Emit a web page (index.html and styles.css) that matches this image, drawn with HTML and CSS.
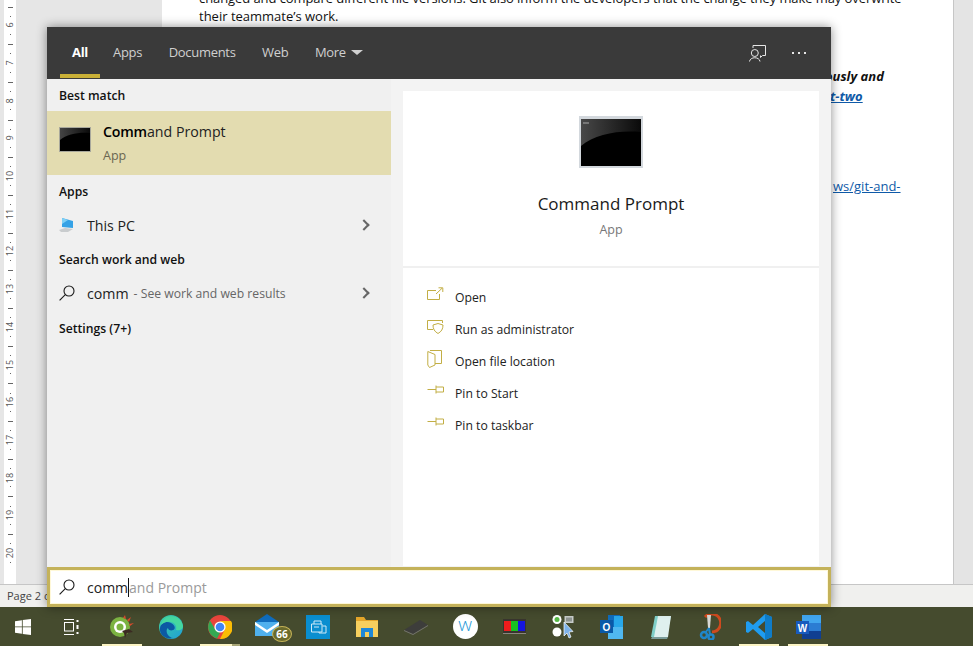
FILE: index.html
```html
<!DOCTYPE html>
<html lang="en">
<head>
  <meta charset="UTF-8">
  <title>Command Prompt search</title>
  <link rel="stylesheet" href="styles.css">
</head>
<body>

  <!-- Word window behind the search panel -->
  <div class="word">
    <div class="ruler-strip">
      <div class="ruler">
        <div class="ruler-cell"><span>6</span></div>
        <div class="ruler-cell"><span>7</span></div>
        <div class="ruler-cell"><span>8</span></div>
        <div class="ruler-cell"><span>9</span></div>
        <div class="ruler-cell"><span>10</span></div>
        <div class="ruler-cell"><span>11</span></div>
        <div class="ruler-cell"><span>12</span></div>
        <div class="ruler-cell"><span>13</span></div>
        <div class="ruler-cell"><span>14</span></div>
        <div class="ruler-cell"><span>15</span></div>
        <div class="ruler-cell"><span>16</span></div>
        <div class="ruler-cell"><span>17</span></div>
        <div class="ruler-cell"><span>18</span></div>
        <div class="ruler-cell"><span>19</span></div>
        <div class="ruler-cell"><span>20</span></div>
      </div>
    </div>
    <div class="doc-page">
      <div class="doc-line doc-first">changed and compare different file versions. Git also inform the developers that the change they make may overwrite</div>
      <div class="doc-line">their teammate’s work.</div>
      <div class="doc-tail doc-tail-a"><b><i>ously and</i></b></div>
      <div class="doc-tail doc-tail-b"><a><b><i>t-two</i></b></a></div>
      <div class="doc-tail doc-tail-c"><a>ws/git-and-</a></div>
    </div>
    <div class="doc-scroll"></div>
  </div>
  <div class="statusbar">Page 2 of 3</div>

  <div class="taskbar">
    <div class="task-start">
      <svg width="16" height="16" viewBox="0 0 16 16"><path fill="#fff" d="M0 2.2 6.9 1.2V7.500H0ZM7.700 1.100 16 0V7.500H7.700ZM0 8.300H6.900V14.800L0 13.800ZM7.700 8.300H16V16L7.700 14.900Z"/></svg>
    </div>
    <div class="task-view">
      <svg width="16" height="16" viewBox="0 0 16 16" fill="none" stroke="#fff" stroke-width="1"><path d="M1 .5H11M1 15.500H11"/><rect x="1.500" y="3.500" width="9" height="8.500"/><path d="M14.500 1V3M14.500 6V10M14.500 13V15" stroke-width="2"/></svg>
    </div>
    <div class="task-apps">
      <div class="task-app is-open">
        <svg width="26" height="26" viewBox="0 0 26 26"><circle cx="11" cy="13" r="10" fill="#7cb342"/><circle cx="11" cy="13" r="6" fill="#fff"/><circle cx="11" cy="13" r="3.500" fill="#7cb342"/><path fill="#d84a2b" d="M14 4 16 1 17 5ZM18 6 22 3 20 8ZM20 10 25 9 21 12Z"/><path fill="#3b2a22" d="M13 17 20 15 24 18 18 19 16 24 15 19Z"/></svg>
      </div>
      <div class="task-app">
        <svg width="24" height="24" viewBox="0 0 24 24"><defs><linearGradient id="edgeA" x1="0" y1="0" x2="1" y2="1"><stop offset="0" stop-color="#3fd0a0"/><stop offset="1" stop-color="#1f9fd8"/></linearGradient></defs><circle cx="12" cy="12" r="12" fill="url(#edgeA)"/><path fill="#0c59a4" d="M1 13C2 7 8 6 12 8 16 10 17 14 14 15 12 16 9 15 9 13 6 15 8 22 14 23 7 25 0 20 1 13Z"/><path fill="#45d7a0" d="M12 1C18 1 23 5 24 11 24 15 20 16 17 15 18 11 16 8 12 7 8 6 4 8 2 10 3 5 7 1 12 1Z"/></svg>
      </div>
      <div class="task-app is-open is-split">
        <svg width="24" height="24" viewBox="0 0 24 24"><circle cx="12" cy="12" r="12" fill="#e8453c"/><path fill="#fbbc05" d="M12 6H23A12 12 0 0 1 12 24L17 14Z"/><path fill="#34a853" d="M2 5.500 7 14 12 18 9 23.500A12 12 0 0 1 2 5.500Z"/><circle cx="12" cy="12" r="5.600" fill="#fff"/><circle cx="12" cy="12" r="4.300" fill="#4285f4"/></svg>
      </div>
      <div class="task-app">
        <svg class="mail-icon" width="26" height="22" viewBox="0 0 26 22"><path fill="#0f6cbd" d="M1 8 13 0 25 8V9H1Z"/><rect x="1" y="8" width="24" height="14" fill="#4fb0ee"/><path fill="#fff" d="M1 8 13 16 25 8V11L13 19 1 11Z"/></svg>
        <span class="mail-badge">66</span>
      </div>
      <div class="task-app">
        <svg width="24" height="24" viewBox="0 0 24 24"><rect width="24" height="24" fill="#0a8ed0"/><path fill="none" stroke="#cfe9f7" stroke-width="1" d="M8 9V6H15V9M5.500 9H16V17H5.500ZM16.500 11H20V18H13V17M8 12H13"/></svg>
      </div>
      <div class="task-app">
        <svg width="24" height="22" viewBox="0 0 24 22"><path fill="#e4a62a" d="M1 1H9L11 4H23V9H1Z"/><rect x="1" y="5" width="22" height="16" fill="#f6cf5e"/><path fill="#1e88d8" d="M6 21V12H18V21H14V16H10V21Z"/></svg>
      </div>
      <div class="task-app">
        <svg width="26" height="16" viewBox="0 0 26 16"><path fill="#3d3d3b" d="M1 11 17 1 25 6 10 15Z"/><path fill="#75756f" d="M1 11 10 15V16L1 12ZM10 15 25 6V7L10 16Z"/></svg>
      </div>
      <div class="task-app">
        <div class="w-badge">w</div>
      </div>
      <div class="task-app">
        <div class="rgb-icon"><i class="rgb-r"></i><i class="rgb-g"></i><i class="rgb-b"></i></div>
      </div>
      <div class="task-app">
        <svg width="24" height="24" viewBox="0 0 24 24"><circle cx="6" cy="4.500" r="4.500" fill="#fff"/><circle cx="6" cy="4.500" r="2.500" fill="#57b947"/><circle cx="6" cy="17" r="4.500" fill="#fff"/><rect x="13.500" y="1" width="9" height="7" fill="#c8ccca"/><rect x="15" y="2.500" width="6" height="4" fill="#8d9390"/><path fill="#7db2ea" stroke="#fff" stroke-width=".7" d="M13 7V21L16 18 18 23 20 22 18 17 22 16.500Z"/></svg>
      </div>
      <div class="task-app">
        <svg width="24" height="24" viewBox="0 0 24 24"><rect x="8" y="0" width="12" height="24" fill="#0f6cbd"/><rect x="14" y="1" width="9" height="11" fill="#28a8ea"/><path fill="#50b8f0" d="M8 12 23 12V24H8Z"/><rect x="0" y="5" width="13" height="13" fill="#0a5aa8"/><text class="tile-letter" x="6.500" y="15.500" text-anchor="middle">O</text></svg>
      </div>
      <div class="task-app">
        <svg width="22" height="24" viewBox="0 0 22 24"><path fill="#7fcfc8" d="M5 1H21L16 22H1Z"/><path fill="#dff0ee" d="M8 1H21L18 22H4Z"/><path fill="#7a9c99" d="M2 22H18L17 24H1Z"/></svg>
      </div>
      <div class="task-app">
        <svg width="22" height="26" viewBox="0 0 22 26"><path fill="none" stroke="#cf4a1e" stroke-width="3" d="M6 3A9 9 0 1 1 13 18"/><path fill="#d8d8d4" d="M8 1H12L11 14 9 14Z"/><circle cx="5" cy="21" r="3" fill="none" stroke="#1f86c9" stroke-width="2.500"/><circle cx="12" cy="23" r="2.500" fill="none" stroke="#1f86c9" stroke-width="2.500"/><path stroke="#1f86c9" stroke-width="2" d="M6 19 10 14M11 21 10 14"/></svg>
      </div>
      <div class="task-app is-open">
        <svg width="26" height="26" viewBox="0 0 26 26"><path fill="#1f9cf0" d="M19 0 26 3V23L19 26 7 15 2 19 0 18V8L2 7 7 11ZM19 7 12 13 19 19Z"/><path fill="#0f7cc8" d="M19 0 26 3V23L19 26Z"/></svg>
      </div>
      <div class="task-app is-open">
        <svg width="25" height="24" viewBox="0 0 25 24"><rect x="6" y="0" width="19" height="8" fill="#41a5ee"/><rect x="6" y="8" width="19" height="8" fill="#2b7cd3"/><rect x="6" y="16" width="19" height="8" fill="#103f91"/><rect x="0" y="6" width="13" height="13" fill="#185abd"/><text class="tile-letter" x="6.500" y="16.500" text-anchor="middle">W</text></svg>
      </div>
    </div>
  </div>

  <!-- Search panel -->
  <div class="search">
    <div class="search-head">
      <div class="tabs">
        <div class="tab tab-active">All</div>
        <div class="tab">Apps</div>
        <div class="tab">Documents</div>
        <div class="tab">Web</div>
        <div class="tab">More <span class="caret"></span></div>
      </div>
      <div class="head-icons">
        <svg width="17" height="17" viewBox="0 0 17 17" fill="none" stroke="#e6e6e6" stroke-width="1"><path d="M4 3V.5H16.500V10.500H13.500L11.500 12.500V10.500"/><circle cx="5.800" cy="8" r="3.500"/><path d="M.5 16.500C1 11.500 10.500 11.500 11 16.500"/></svg>
        <div class="more-dots"><i></i><i></i><i></i></div>
      </div>
    </div>

    <div class="search-body">
      <div class="results">
        <div class="group-title">Best match</div>
        <div class="result-main">
          <svg class="result-icon" width="32" height="25" viewBox="0 0 32 25"><defs><linearGradient id="cmdGloss" x1="0" y1="0" x2="1" y2="0"><stop offset="0" stop-color="#444"/><stop offset="1" stop-color="#0a0a0a"/></linearGradient></defs><rect width="32" height="25" fill="#a8a89c"/><rect x="1" y="1" width="30" height="23" fill="#000"/><path fill="url(#cmdGloss)" d="M1 1H31V6C20 5 8 7 1 13Z"/></svg>
          <div class="result-text">
            <div class="result-name"><span class="match">Comm</span>and Prompt</div>
            <div class="result-kind">App</div>
          </div>
        </div>
        <div class="group-title">Apps</div>
        <div class="result-row">
          <svg class="row-icon" width="16" height="16" viewBox="0 0 16 16"><path fill="#35a2e6" d="M3 1 14 4V11L3 10Z"/><path fill="#7fd0f5" d="M3 1 9 3 3 7Z"/><path fill="#c9ccce" d="M0 13 6 11 14 12 9 15 2 15Z"/></svg>
          <span class="row-name">This PC</span>
          <span class="chevron"></span>
        </div>
        <div class="group-title">Search work and web</div>
        <div class="result-row">
          <svg class="row-icon" width="16" height="16" viewBox="0 0 16 16" fill="none" stroke="#1a1a1a" stroke-width="1.100"><circle cx="10" cy="6" r="5"/><path d="M6.300 9.700 .6 15.400"/></svg>
          <span class="row-name">comm</span>
          <span class="row-hint">- See work and web results</span>
          <span class="chevron"></span>
        </div>
        <div class="group-title">Settings (7+)</div>
      </div>

      <div class="preview">
        <div class="preview-card">
          <div class="hero">
            <svg width="64" height="52" viewBox="0 0 64 52"><defs><linearGradient id="cmdGlossBig" x1="0" y1="0" x2="1" y2="0"><stop offset="0" stop-color="#484848"/><stop offset="1" stop-color="#0a0a0a"/></linearGradient></defs><rect width="64" height="52" fill="#d3d8dd"/><rect x="2" y="3" width="60" height="47" fill="#000"/><path fill="url(#cmdGlossBig)" d="M2 3H62V16C40 14 16 18 2 30Z"/><path stroke="#aaa" stroke-width="1" d="M4 7H10"/></svg>
            <div class="hero-name">Command Prompt</div>
            <div class="hero-kind">App</div>
          </div>
          <div class="actions">
            <div class="action">
              <svg width="17" height="16" viewBox="0 0 17 16" fill="none" stroke="#c2ae45"><path d="M9 3.500H.5V12.500H12.500V7M9 7 15 1.300M11.500 .8H15.800V5"/></svg>
              <span>Open</span>
            </div>
            <div class="action">
              <svg width="17" height="16" viewBox="0 0 17 16" fill="none" stroke="#c2ae45"><path d="M6 10.500H.5V1.500H15.500V4"/><path d="M11 4.500 16 6C16 10 14.500 12.500 11 14.500 7.500 12.500 6 10 6 6Z"/></svg>
              <span>Run as administrator</span>
            </div>
            <div class="action">
              <svg width="17" height="18" viewBox="0 0 17 18" fill="none" stroke="#c2ae45"><path d="M3 .5H14.500V13.500H8M.8 1.500 8 4.500V15L2.500 17.500 .8 15Z"/></svg>
              <span>Open file location</span>
            </div>
            <div class="action">
              <svg width="17" height="16" viewBox="0 0 17 16" fill="none" stroke="#c2ae45"><path d="M.5 6.500H9M9 2.500V10.500M9 4H16.500V9H9"/></svg>
              <span>Pin to Start</span>
            </div>
            <div class="action">
              <svg width="17" height="16" viewBox="0 0 17 16" fill="none" stroke="#c2ae45"><path d="M.5 6.500H9M9 2.500V10.500M9 4H16.500V9H9"/></svg>
              <span>Pin to taskbar</span>
            </div>
          </div>
        </div>
      </div>
    </div>

    <div class="search-box">
      <svg width="16" height="16" viewBox="0 0 16 16" fill="none" stroke="#1a1a1a" stroke-width="1.100"><circle cx="10" cy="6" r="5"/><path d="M6.300 9.700 .6 15.400"/></svg>
      <div class="search-text"><span class="typed">comm</span><span class="suggest">and Prompt</span></div>
    </div>
  </div>

</body>
</html>
```

FILE: styles.css
```css
body {
  font-family: "Open Sans", "Noto Sans", sans-serif;
  margin: 0;
  width: 973px;
  height: 646px;
  position: relative;
  overflow: hidden;
  background: #e6e6e6;
  color: #1a1a1a;
}

/* Word window */
.word {
  display: flex;
  height: 585px;
  border-bottom: 1px solid #c6c6c6;
  box-sizing: border-box;
}

.ruler-strip {
  width: 162px;
  flex: none;
  padding-left: 4px;
  box-sizing: border-box;
  background: #e6e6e6;
}

.ruler {
  width: 12px;
  height: 100%;
  background: #fff;
  padding-top: 6.500px;
  box-sizing: border-box;
  overflow: hidden;
}

.ruler-cell {
  height: 37.700px;
  font-size: 9px;
  color: #555;
  display: flex;
  align-items: center;
  justify-content: center;
  background:
    linear-gradient(#666, #666) center top / 5px 1px no-repeat,
    linear-gradient(#666, #666) center 25% / 1px 1px no-repeat,
    linear-gradient(#666, #666) center 75% / 1px 1px no-repeat;
}

.ruler-cell span {
  transform: rotate(-90deg);
  line-height: 10px;
}

.doc-page {
  flex: 1;
  background: #fff;
  padding-left: 37px;
  font-size: 13px;
  color: #111;
  overflow: hidden;
}

.doc-line {
  height: 17.500px;
  line-height: 17.500px;
  white-space: nowrap;
}

.doc-first {
  margin-top: -10px;
  letter-spacing: -0.080px;
}

.doc-tail {
  white-space: nowrap;
  line-height: 20px;
  height: 20px;
}

.doc-tail a {
  color: #0f5aa8;
  text-decoration: underline;
}

.doc-tail-a {
  margin-top: 41px;
  padding-left: 626px;
}

.doc-tail-b {
  padding-left: 631px;
}

.doc-tail-c {
  margin-top: 70px;
  padding-left: 634px;
}

.doc-scroll {
  width: 20px;
  flex: none;
  background: #e4e4e4;
  border-left: 1px solid #c6c6c6;
  box-sizing: border-box;
}

.statusbar {
  height: 22px;
  line-height: 22px;
  background: #f0f0ee;
  font-size: 11px;
  color: #444;
  padding-left: 7px;
}

/* Taskbar */
.taskbar {
  height: 39px;
  background: #454b2e;
  display: flex;
  align-items: center;
}

.task-start {
  width: 46px;
  flex: none;
  display: flex;
  justify-content: center;
}

.task-view {
  width: 50px;
  flex: none;
  display: flex;
  justify-content: center;
  margin-right: 6px;
}

.task-apps {
  display: flex;
  gap: 9px;
  height: 100%;
}

.task-app {
  width: 40px;
  height: 100%;
  position: relative;
  display: flex;
  align-items: center;
  justify-content: center;
  box-sizing: border-box;
}

.is-open {
  border-bottom: 2px solid #fcf4c4;
  padding-top: 2px;
}

.is-split {
  border-image: linear-gradient(to right, #fcf4c4 78%, #a8a678 78%) 1;
}

.mail-icon {
  margin-right: 4px;
  margin-top: -4px;
}

.mail-badge {
  position: absolute;
  right: -3px;
  bottom: 4px;
  width: 20px;
  height: 16px;
  line-height: 15px;
  border-radius: 50%;
  background: #6a6a2c;
  border: 1px solid #c5b358;
  box-sizing: border-box;
  font-size: 10px;
  font-weight: 700;
  color: #fff;
  text-align: center;
}

.w-badge {
  width: 25px;
  height: 25px;
  line-height: 21px;
  border-radius: 50%;
  background: #fff;
  color: #1f9ad8;
  text-align: center;
  font-size: 19px;
  font-weight: 300;
}

.rgb-icon {
  display: flex;
  width: 23px;
  height: 15px;
  padding: 2px 1px;
  box-sizing: border-box;
  background: #38342e;
  border-bottom: 1px solid #8a857c;
}

.rgb-icon i {
  flex: 1;
}

.rgb-r { background: #ee1c1c; }
.rgb-g { background: #18c020; }
.rgb-b { background: #1515e0; }

.tile-letter {
  font-family: "Liberation Sans", sans-serif;
  font-size: 10px;
  font-weight: 700;
  fill: #fff;
}

/* Search panel */
.search {
  position: absolute;
  left: 47px;
  top: 27px;
  width: 784px;
  height: 580px;
  display: flex;
  flex-direction: column;
  background: #f3f3f3;
  box-shadow: 0 0 10px rgba(0, 0, 0, 0.45);
}

.search-head {
  height: 52px;
  flex: none;
  background: #3a3a3a;
  display: flex;
  justify-content: space-between;
  align-items: center;
}

.tabs {
  display: flex;
  height: 100%;
  padding-left: 13px;
  gap: 2.500px;
}

.tab {
  position: relative;
  line-height: 51px;
  font-size: 13px;
  letter-spacing: -0.3px;
  color: #d0d0d0;
  padding: 0 12px;
}

.tab-active {
  color: #fff;
  font-weight: 700;
  margin-right: -1.500px;
}

.tab-active::after {
  content: "";
  position: absolute;
  left: 0;
  right: 0;
  bottom: 1px;
  height: 4px;
  background: #c9b037;
}

.caret {
  display: inline-block;
  margin-left: 2px;
  vertical-align: 2px;
  border-left: 6px solid transparent;
  border-right: 6px solid transparent;
  border-top: 5px solid #d0d0d0;
}

.head-icons {
  display: flex;
  align-items: center;
  gap: 26px;
  padding-right: 25px;
}

.more-dots {
  display: flex;
  gap: 4.500px;
}

.more-dots i {
  width: 1.700px;
  height: 1.700px;
  background: #e6e6e6;
}

.search-body {
  flex: 1;
  display: flex;
  min-height: 0;
}

.results {
  width: 344px;
  flex: none;
  background: #f0f0f0;
}

.group-title {
  height: 32px;
  line-height: 34px;
  padding-left: 12px;
  font-size: 12.200px;
  font-weight: 600;
  color: #111;
}

.group-title:last-child {
  margin-top: 1px;
}

.result-main {
  height: 64px;
  background: #e3dcb0;
  display: flex;
  padding-left: 12px;
  gap: 12px;
}

.result-icon {
  margin-top: 16px;
}

.result-text {
  padding-top: 11px;
}

.result-name {
  font-size: 14.200px;
  line-height: 20px;
  color: #222;
}

.match {
  color: #000;
  font-weight: 600;
  letter-spacing: -0.2px;
}

.result-kind {
  font-size: 12.500px;
  line-height: 20px;
  margin-top: 4px;
  color: #6a6650;
}

.result-row {
  height: 36px;
  display: flex;
  align-items: center;
  padding: 0 23px 0 12px;
}

.row-icon {
  margin-right: 12px;
  flex: none;
}

.row-name {
  font-size: 14.200px;
  color: #222;
}

.row-hint {
  margin-left: 5px;
  font-size: 12.200px;
  color: #666;
}

.chevron {
  margin-left: auto;
  width: 6px;
  height: 6px;
  border-top: 2px solid #666;
  border-right: 2px solid #666;
  transform: rotate(45deg);
}

.preview {
  flex: 1;
  padding: 12px 12px 1px;
}

.preview-card {
  height: 100%;
  background: #fff;
}

.hero {
  height: 177px;
  box-sizing: border-box;
  padding-top: 25px;
  border-bottom: 2px solid #f0f0f0;
  display: flex;
  flex-direction: column;
  align-items: center;
}

.hero-name {
  margin-top: 22px;
  font-size: 17px;
  line-height: 28px;
  color: #1a1a1a;
}

.hero-kind {
  margin-top: 2px;
  font-size: 12.500px;
  line-height: 20px;
  color: #777;
}

.actions {
  padding: 13px 0 0 24px;
}

.action {
  height: 32px;
  display: flex;
  align-items: center;
  gap: 11px;
  font-size: 12.200px;
  color: #222;
}

.action svg {
  margin-top: -4px;
}

.search-box {
  height: 40px;
  flex: none;
  box-sizing: border-box;
  background: #fff;
  border: 3px solid #c4b25a;
  outline: 1px solid #fff8d8;
  outline-offset: -4px;
  display: flex;
  align-items: center;
  padding-left: 9px;
  gap: 12px;
}

.search-text {
  font-size: 14px;
}

.typed {
  color: #222;
  border-right: 1px solid #111;
}

.suggest {
  color: #9a9a9a;
}
```
